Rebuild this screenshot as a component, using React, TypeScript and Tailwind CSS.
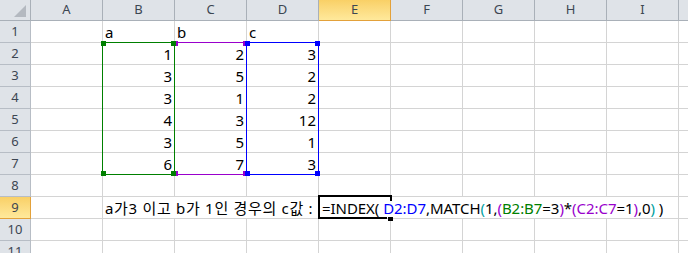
import React from "react";

const COLS = ["A", "B", "C", "D", "E", "F", "G", "H", "I", "J"];

// cell values for rows 1..8 (columns B, C, D)
const cells: Record<string, string> = {
  B1: "a",
  C1: "b",
  D1: "c",
  B2: "1", C2: "2", D2: "3",
  B3: "3", C3: "5", D3: "2",
  B4: "3", C4: "1", D4: "2",
  B5: "4", C5: "3", D5: "12",
  B6: "3", C6: "5", D6: "1",
  B7: "6", C7: "7", D7: "3",
};

const font = "font-['Noto_Sans','Noto_Sans_CJK_KR',sans-serif]";

interface Range {
  col: number; // 1 = A
  color: string;
  box: string;
  dot: string;
}

const ranges: Range[] = [
  { col: 3, color: "purple", box: "border-[#9900cc]", dot: "bg-[#9900cc]" },
  { col: 2, color: "green", box: "border-[#008000]", dot: "bg-[#008000]" },
  { col: 4, color: "blue", box: "border-[#0000ff]", dot: "bg-[#0000ff]" },
];

function ColHeader({ label, selected }: { label: string; selected?: boolean }) {
  return (
    <div
      className={
        selected
          ? "w-[72px] h-[21px] shrink-0 flex items-center justify-center border-r border-b border-[#e3a13a] bg-gradient-to-b from-[#f9d066] to-[#ffe99b] text-[13px] text-[#3c4652]"
          : "w-[72px] h-[21px] shrink-0 flex items-center justify-center border-r border-b border-[#a9b0b8] bg-[#dfe3e8] text-[13px] text-[#3c4652]"
      }
    >
      {label}
    </div>
  );
}

function RowHeader({ n, selected }: { n: number; selected?: boolean }) {
  return (
    <div
      className={
        selected
          ? "w-[31px] h-[22px] shrink-0 flex items-center justify-center border-r border-b border-[#e3a13a] bg-gradient-to-b from-[#f9d066] to-[#ffe99b] text-[13px] text-[#3c4652]"
          : "w-[31px] h-[22px] shrink-0 flex items-center justify-center border-r border-b border-[#b7bdc5] bg-[#dfe3e8] text-[13px] text-[#3c4652]"
      }
    >
      {n}
    </div>
  );
}

function Cell({ value }: { value?: string }) {
  const isNum = value !== undefined && /^\d+$/.test(value);
  return (
    <div
      className={`w-[72px] h-[22px] shrink-0 flex items-end border-r border-b border-[#d4d4d4] text-[15px] leading-[20px] text-black ${
        isNum ? "justify-end pr-[2px]" : "justify-start pl-[2px]"
      }`}
    >
      {value}
    </div>
  );
}

function Formula() {
  return (
    <span className="whitespace-pre">
      <span>=INDEX(</span>
      <span className="text-[#0000ff]"> D2:D7</span>
      <span>,MATCH</span>
      <span className="text-[#00a0a0]">(</span>
      <span>1,</span>
      <span className="text-[#9900cc]">(</span>
      <span className="text-[#008000]">B2:B7</span>
      <span>=3</span>
      <span className="text-[#9900cc]">)</span>
      <span>*</span>
      <span className="text-[#9900cc]">(C2:C7</span>
      <span>=1</span>
      <span className="text-[#9900cc]">)</span>
      <span>,0</span>
      <span className="text-[#00a0a0]">)</span>
      <span> )</span>
    </span>
  );
}

export default function App() {
  const rows = [1, 2, 3, 4, 5, 6, 7, 8, 9, 10, 11];

  return (
    <div className={`relative w-[688px] h-[253px] overflow-hidden bg-white ${font}`}>
      {/* column headers */}
      <div className="flex">
        <div className="relative w-[31px] h-[21px] shrink-0 border-r border-b border-[#a9b0b8] bg-[#dfe3e8]">
          <svg className="absolute left-0 top-0" width="30" height="20">
            <polygon points="14,17 26,17 26,5" fill="#b4b9c0" />
          </svg>
        </div>
        {COLS.map((c) => (
          <ColHeader key={c} label={c} selected={c === "E"} />
        ))}
      </div>

      {/* rows */}
      {rows.map((r) =>
        r === 9 ? (
          <div key={r} className="flex">
            <RowHeader n={r} selected />
            <Cell />
            <div className="w-[216px] h-[22px] shrink-0 flex items-end pl-[2px] border-r border-b border-[#d4d4d4] text-[15px] leading-[20px] tracking-[0.7px] text-black whitespace-nowrap">
              a가3 이고 b가 1인 경우의 c값 :
            </div>
            <div className="w-[360px] h-[22px] shrink-0 flex items-end pl-[3px] border-r border-b border-[#d4d4d4] text-[15px] leading-[20px] tracking-[-0.05px] text-black whitespace-nowrap">
              <Formula />
            </div>
            <Cell />
          </div>
        ) : (
          <div key={r} className="flex">
            <RowHeader n={r} />
            {COLS.map((c) => (
              <Cell key={c} value={cells[`${c}${r}`]} />
            ))}
          </div>
        )
      )}

      {/* colored range outlines B2:B7, C2:C7, D2:D7 */}
      {ranges.map((rg) => {
        const x1 = 30 + 72 * (rg.col - 1);
        const y1 = 42;
        const x2 = x1 + 72;
        const y2 = 174;
        return (
          <React.Fragment key={rg.color}>
            <div
              className={`absolute border ${rg.box}`}
              style={{ left: x1, top: y1, width: x2 - x1 + 1, height: y2 - y1 + 1 }}
            />
            <div className={`absolute w-[5px] h-[5px] ${rg.dot}`} style={{ left: x1 - 1, top: y1 - 1 }} />
            <div className={`absolute w-[5px] h-[5px] ${rg.dot}`} style={{ left: x2 - 3, top: y1 - 1 }} />
            <div className={`absolute w-[5px] h-[5px] ${rg.dot}`} style={{ left: x1 - 1, top: y2 - 3 }} />
            <div className={`absolute w-[5px] h-[5px] ${rg.dot}`} style={{ left: x2 - 3, top: y2 - 3 }} />
          </React.Fragment>
        );
      })}

      {/* active cell E9 */}
      <div className="absolute left-[318px] top-[195px] w-[69px] h-[24px] border-t-2 border-l-2 border-b-2 border-black" />
      <div className="absolute left-[387px] top-[195px] w-[5px] h-[2px] bg-black" />
      <div className="absolute left-[390px] top-[195px] w-[2px] h-[6px] bg-black" />
      <div className="absolute left-[388px] top-[217px] w-[5px] h-[4px] bg-black" />
    </div>
  );
}
